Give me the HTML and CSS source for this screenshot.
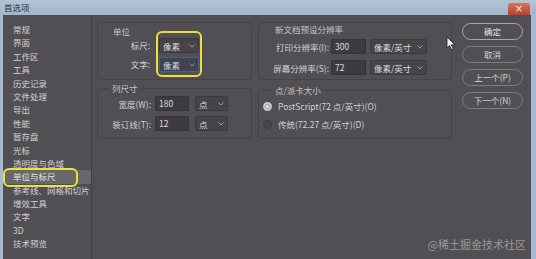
FILE: index.html
```html
<!DOCTYPE html>
<html lang="zh-CN">
<head>
<meta charset="UTF-8">
<meta name="viewport" content="width=device-width, initial-scale=1.0">
<title>首选项</title>
<link rel="stylesheet" href="styles.css">
</head>
<body>

  <div class="window">
    <div class="titlebar">
      <span class="title">首选项</span>
      <span class="close-btn">&#215;</span>
    </div>

    <div class="content">
      <!-- Lista de secciones -->
      <ul class="nav">
        <li>常规</li>
        <li>界面</li>
        <li>工作区</li>
        <li>工具</li>
        <li>历史记录</li>
        <li>文件处理</li>
        <li>导出</li>
        <li>性能</li>
        <li>暂存盘</li>
        <li>光标</li>
        <li>透明度与色域</li>
        <li class="active">单位与标尺</li>
        <li>参考线、网格和切片</li>
        <li>增效工具</li>
        <li>文字</li>
        <li>3D</li>
        <li>技术预览</li>
      </ul>

      <div class="panel">
        <div class="col col-left">
          <div class="group group-units">
            <div class="units-labels">
              <div class="group-title">单位</div>
              <div class="label label-ruler">标尺:</div>
              <div class="label label-type">文字:</div>
            </div>
            <div class="mark-box">
              <div class="select">
                <span>像素</span>
                <svg class="chev" width="6" height="4" viewBox="0 0 6 4"><path d="M0.5 0.5 L3 3 L5.5 0.5" fill="none" stroke="#9a989c" stroke-width="1"/></svg>
              </div>
              <div class="select focus">
                <span>像素</span>
                <svg class="chev" width="6" height="4" viewBox="0 0 6 4"><path d="M0.5 0.5 L3 3 L5.5 0.5" fill="none" stroke="#9a989c" stroke-width="1"/></svg>
              </div>
            </div>
          </div>

          <fieldset class="group group-column">
            <legend>列尺寸</legend>
            <div class="row">
              <span class="label">宽度(W):</span>
              <div class="input">180</div>
              <div class="select select-unit">
                <span>点</span>
                <svg class="chev" width="6" height="4" viewBox="0 0 6 4"><path d="M0.5 0.5 L3 3 L5.5 0.5" fill="none" stroke="#9a989c" stroke-width="1"/></svg>
              </div>
            </div>
            <div class="row">
              <span class="label">装订线(T):</span>
              <div class="input">12</div>
              <div class="select select-unit">
                <span>点</span>
                <svg class="chev" width="6" height="4" viewBox="0 0 6 4"><path d="M0.5 0.5 L3 3 L5.5 0.5" fill="none" stroke="#9a989c" stroke-width="1"/></svg>
              </div>
            </div>
          </fieldset>
        </div>

        <div class="col col-right">
          <div class="group group-res">
            <div class="group-title">新文档预设分辨率</div>
            <div class="row">
              <span class="label">打印分辨率(I):</span>
              <div class="input">300</div>
              <div class="select select-res">
                <span>像素/英寸</span>
                <svg class="chev" width="6" height="4" viewBox="0 0 6 4"><path d="M0.5 0.5 L3 3 L5.5 0.5" fill="none" stroke="#9a989c" stroke-width="1"/></svg>
              </div>
            </div>
            <div class="row">
              <span class="label">屏幕分辨率(S):</span>
              <div class="input">72</div>
              <div class="select select-res">
                <span>像素/英寸</span>
                <svg class="chev" width="6" height="4" viewBox="0 0 6 4"><path d="M0.5 0.5 L3 3 L5.5 0.5" fill="none" stroke="#9a989c" stroke-width="1"/></svg>
              </div>
            </div>
          </div>

          <fieldset class="group group-point">
            <legend>点/派卡大小</legend>
            <div class="radio-row">
              <span class="radio checked"></span>
              <span>PostScript(72 点/英寸)(O)</span>
            </div>
            <div class="radio-row">
              <span class="radio"></span>
              <span>传统(72.27 点/英寸)(D)</span>
            </div>
          </fieldset>
        </div>
      </div>

      <div class="actions">
        <button class="btn default">确定</button>
        <button class="btn">取消</button>
        <button class="btn">上一个(P)</button>
        <button class="btn">下一个(N)</button>
      </div>
    </div>

    <div class="watermark">@稀土掘金技术社区</div>

    <!-- Puntero del ratón -->
    <svg class="cursor" width="11" height="15" viewBox="0 0 11 15">
      <path d="M1 1 L1 12 L3.5 9.5 L5.5 13.5 L7.2 12.7 L5.3 8.8 L8.8 8.8 Z" fill="#f2f2f2" stroke="#222" stroke-width="0.8"/>
    </svg>
  </div>

</body>
</html>
```

FILE: styles.css
```css
  body {
      margin: 0;
      background-color: #514f53;
      font-family: "Noto Sans CJK SC", "Liberation Sans", sans-serif;
  }

  /* Marco de la ventana */
  .window {
      position: relative;
      width: 536px;
      height: 259px;
      box-sizing: border-box;
      background-color: #a7b9cd;
      overflow: hidden;
  }

  .titlebar {
      display: flex;
      justify-content: space-between;
      align-items: flex-end;
      height: 15px;
      padding: 0 6px 0 4px;
      background: linear-gradient(#b3c4d6, #a3b6cb);
  }

  .title {
      align-self: center;
      font-size: 8.5px;
      line-height: 11px;
      color: #27323f;
  }

  .close-btn {
      width: 22px;
      height: 12px;
      border-radius: 3px 3px 0 0;
      background: linear-gradient(#d9735a, #b9432e);
      color: #fbe9e4;
      font-size: 10px;
      line-height: 11px;
      text-align: center;
      font-family: "DejaVu Sans", sans-serif;
  }

  .content {
      display: flex;
      height: 244px;
      margin: 0 5px 0 3px;
      background-color: #514f53;
      color: #d2d1d3;
      font-size: 8.5px;
  }

  /* Lista lateral */
  .nav {
      list-style: none;
      margin: 0;
      padding: 8px 0 0 0;
      width: 88px;
      flex: none;
      border-right: 1px solid #413f43;
  }

  .nav li {
      position: relative;
      height: 13.4px;
      line-height: 13.4px;
      padding-left: 10px;
      white-space: nowrap;
  }

  .nav li.active {
      background-color: #69676b;
      color: #e4e4e4;
  }

  /* Marca amarilla sobre el elemento activo */
  .nav li.active::after {
      content: "";
      position: absolute;
      top: -2px;
      bottom: -3px;
      left: 0;
      width: 71px;
      border: 2px solid #ece03c;
      border-radius: 6px;
  }

  .panel {
      display: flex;
      gap: 6px;
      padding: 7px 0 0 5px;
  }

  .col {
      display: flex;
      flex-direction: column;
  }

  .col-left {
      width: 155px;
  }

  .col-right {
      width: 194px;
  }

  .group {
      box-sizing: border-box;
      border: 1px solid #444246;
      border-radius: 4px;
      margin: 0;
      min-width: 0;
  }

  .group legend {
      margin-left: 11px;
      padding: 0 3px;
      line-height: 13px;
      color: #c6c5c7;
  }

  .group-title {
      line-height: 12px;
      color: #c6c5c7;
  }

  .label {
      text-align: right;
      white-space: nowrap;
  }

  .row {
      display: flex;
      align-items: center;
      height: 15px;
  }

  /* Campos */
  .input {
      box-sizing: border-box;
      height: 15px;
      line-height: 13px;
      padding-left: 3px;
      background-color: #3d3b3f;
      border: 1px solid #363438;
      color: #dcdcdc;
  }

  .select {
      box-sizing: border-box;
      display: flex;
      justify-content: space-between;
      align-items: center;
      height: 15px;
      padding: 0 3px 0 3px;
      background-color: #464448;
      border: 1px solid #3b393d;
      border-radius: 2px;
      color: #dcdcdc;
  }

  .select.focus {
      background-color: #3e4352;
      border-color: #4f5f7e;
  }

  /* Caja Unidades */
  .group-units {
      display: flex;
      height: 58px;
  }

  .units-labels {
      width: 58px;
  }

  .units-labels .group-title {
      padding-left: 15px;
      margin-top: 2px;
  }

  .units-labels .label {
      padding-right: 6px;
      line-height: 15px;
  }

  .label-ruler {
      margin-top: 1px;
  }

  .label-type {
      margin-top: 4px;
  }

  .mark-box {
      display: flex;
      flex-direction: column;
      gap: 4px;
      width: 46px;
      box-sizing: border-box;
      height: 46px;
      margin-top: 8px;
      padding: 5px 1px 0 1px;
      border: 2px solid #ece03c;
      border-radius: 6px;
  }

  /* Caja Tamaño de columna */
  .group-column {
      margin-top: 2px;
      padding: 1px 0 7px 0;
  }

  .group-column .row + .row {
      margin-top: 5px;
  }

  .group-column .label {
      width: 53px;
      margin-right: 4px;
  }

  .group-column .input {
      width: 34px;
      margin-right: 6px;
  }

  .select-unit {
      width: 33px;
  }

  /* Caja Resolución */
  .group-res {
      height: 58px;
      padding-left: 16px;
  }

  .group-res .group-title {
      margin-top: 0;
      margin-bottom: 4px;
  }

  .group-res .row + .row {
      margin-top: 6px;
  }

  .group-res .label {
      width: 57px;
      margin-left: -3px;
      margin-right: 2px;
  }

  .group-res .input {
      width: 35px;
      margin-right: 4px;
  }

  .select-res {
      width: 57px;
  }

  /* Caja Punto/Pica */
  .group-point {
      margin-top: 4px;
      padding: 3px 0 8px 4px;
  }

  .group-point legend {
      margin-left: 9px;
  }

  .radio-row {
      display: flex;
      align-items: center;
      gap: 6px;
      height: 12px;
      white-space: nowrap;
  }

  .radio-row + .radio-row {
      margin-top: 6px;
  }

  .radio {
      box-sizing: border-box;
      width: 9px;
      height: 9px;
      border-radius: 50%;
      background-color: #48464a;
      border: 1px solid #3c3a3e;
  }

  .radio.checked {
      background-color: #f0f0f0;
      border: 2px solid #c9c8ca;
      box-shadow: inset 0 0 0 1px #8e8c90;
  }

  /* Botones */
  .actions {
      display: flex;
      flex-direction: column;
      gap: 6px;
      width: 61px;
      margin-left: 10px;
      padding-top: 8px;
  }

  .btn {
      height: 17px;
      padding: 0;
      background-color: #514f53;
      border: 1px solid #7f7d81;
      border-radius: 9px;
      color: #d4d4d4;
      font-family: inherit;
      font-size: 8.5px;
      line-height: 15px;
  }

  .btn.default {
      border-color: #a9a8aa;
      color: #e6e6e6;
  }

  .watermark {
      position: absolute;
      right: 10px;
      bottom: 8px;
      font-size: 11px;
      line-height: 14px;
      color: rgba(255, 255, 255, 0.42);
  }

  .cursor {
      position: absolute;
      left: 446px;
      top: 36px;
  }
```
